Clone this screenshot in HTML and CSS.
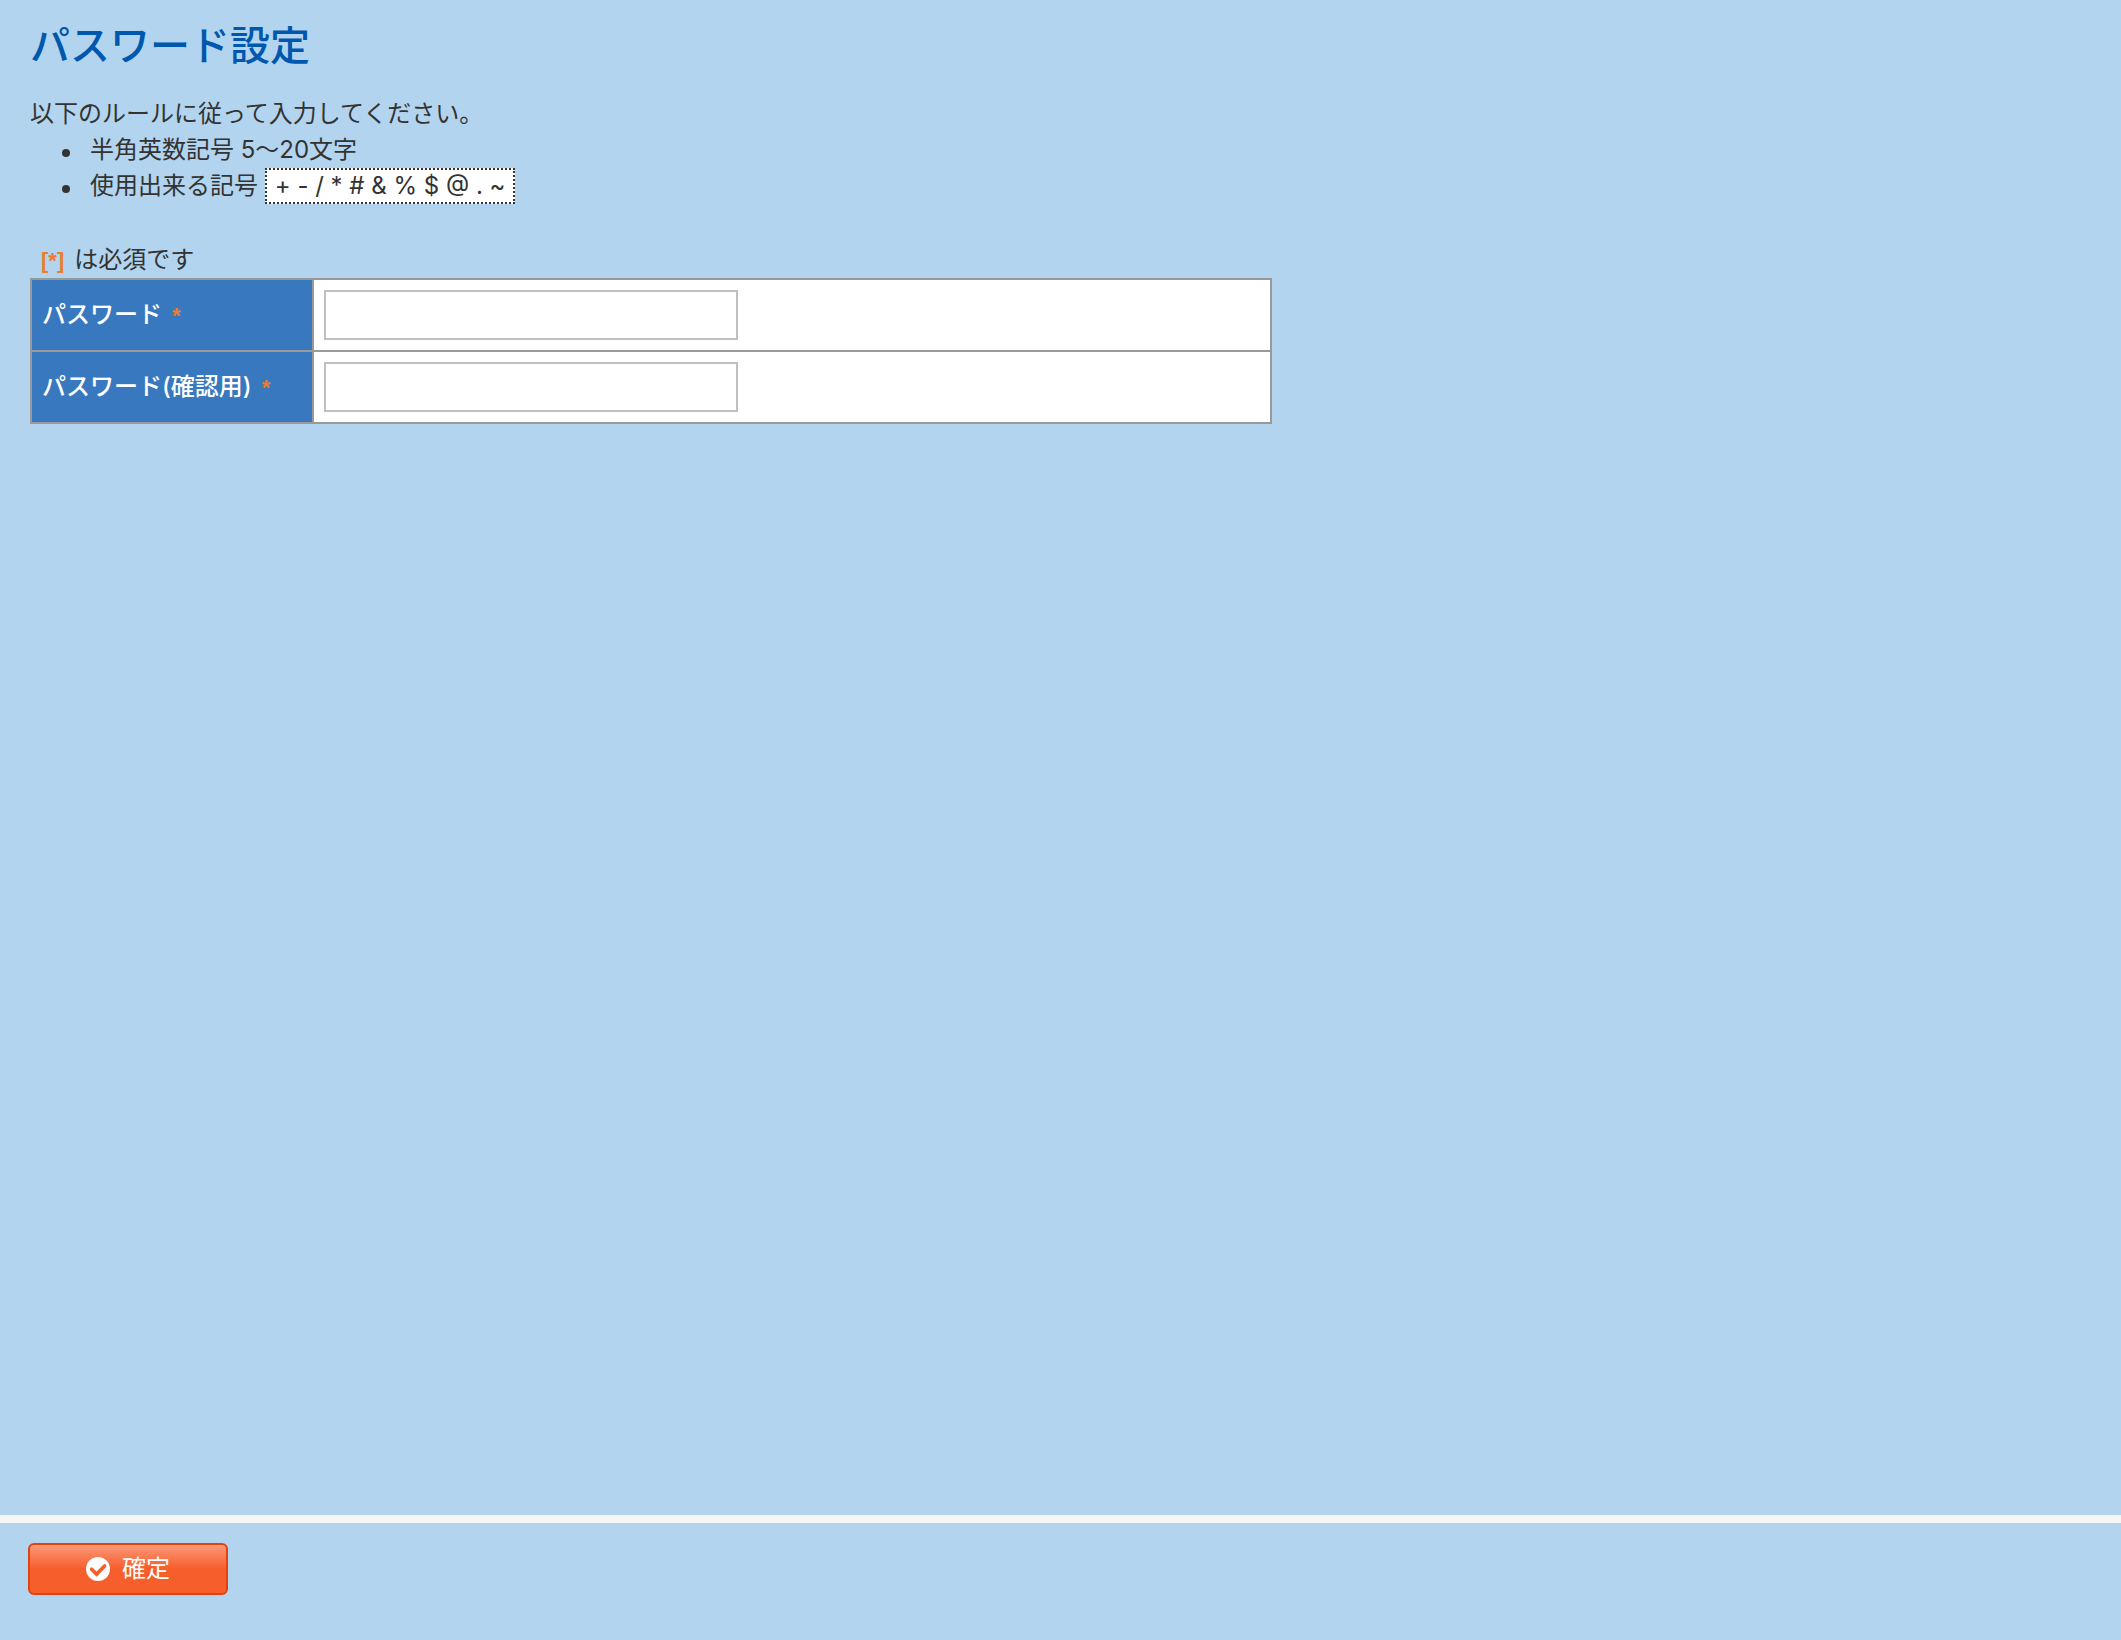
FILE: index.html
```html
<!DOCTYPE html>
<html lang="ja">
<head>
  <meta charset="UTF-8">
  <meta name="viewport" content="width=device-width, initial-scale=1.0">
  <title>パスワード設定</title>
  <link rel="stylesheet" href="styles.css">
</head>
<body>
  <form class="page">
    <main class="content">
      <h1>パスワード設定</h1>

      <p class="lead">以下のルールに従って入力してください。</p>
      <ul class="rules">
        <li>半角英数記号 5〜20文字</li>
        <li>使用出来る記号 <span class="symbols">+ - / * # &amp; % $ @ . ~</span></li>
      </ul>

      <p class="note"><span class="required">[*]</span>は必須です</p>
      <table class="form-table">
        <tr>
          <th><label for="password">パスワード<span class="required">*</span></label></th>
          <td><input type="password" id="password" name="password"></td>
        </tr>
        <tr>
          <th><label for="passwordConfirm">パスワード(確認用)<span class="required">*</span></label></th>
          <td><input type="password" id="passwordConfirm" name="passwordConfirm"></td>
        </tr>
      </table>
    </main>

    <footer class="footer">
      <button type="submit" class="btn">
        <svg class="icon" viewBox="0 0 24 24" aria-hidden="true">
          <circle cx="12" cy="12" r="12" fill="#fff"/>
          <path d="M5.6 12.2l5 4.9 8-8.2" fill="none" stroke="#f65e2b" stroke-width="3.6" stroke-linecap="round"/>
        </svg>
        <span>確定</span>
      </button>
    </footer>
  </form>
</body>
</html>
```

FILE: styles.css
```css
* {
  box-sizing: border-box;
}
body {
  margin: 0;
  background: #b2d4ef;
  color: #333;
  font-family: Inter, "Noto Sans CJK JP", sans-serif;
  font-size: 24px;
  line-height: 36px;
}
h1 {
  margin: 0 0 20px;
  color: #0058ae;
  font-size: 40px;
  font-weight: 500;
  line-height: 60px;
}
.page {
  display: flex;
  flex-direction: column;
  min-height: 100vh;
}
.content {
  flex: 1;
  padding: 16px 30px;
}
.lead, .note {
  margin: 0;
}
.rules {
  margin: 0 0 38px;
  padding-left: 60px;
  list-style: none;
}
.rules li::before {
  content: "";
  display: inline-block;
  width: 8px;
  height: 8px;
  margin: 0 20px 0 -28px;
  border-radius: 50%;
  background: #333;
  vertical-align: 1px;
}
.symbols {
  display: inline-block;
  padding: 0 8px;
  border: 2px dotted #333;
  background: #fff;
  line-height: 32px;
  vertical-align: top;
}
.required {
  color: #ee7b30;
  font-family: "Liberation Sans", sans-serif;
  font-size: 22px;
  font-weight: bold;
  line-height: 1;
}
.note {
  padding-left: 11px;
}
.note .required {
  margin-right: 10px;
}
.form-table {
  width: 1242px;
  max-width: 100%;
  border-collapse: collapse;
}
.form-table th, .form-table td {
  padding: 10px;
  border: 2px solid #999;
}
.form-table th {
  width: 282px;
  background: #3878bf;
  color: #fff;
  font-weight: 500;
  text-align: left;
}
.form-table td {
  background: #fff;
}
.form-table th .required {
  margin-left: 10px;
}
.form-table input {
  display: block;
  width: 414px;
  max-width: 100%;
  height: 50px;
  padding: 0 10px;
  border: 2px solid #bfbfbf;
  background: #fff;
  font: inherit;
}
.footer {
  padding: 20px 28px 45px;
  border-top: 8px solid #f5f5f5;
}
.btn {
  display: flex;
  align-items: center;
  justify-content: center;
  gap: 12px;
  width: 200px;
  height: 52px;
  padding: 0;
  border: 2px solid #e2430e;
  border-radius: 6px;
  background: linear-gradient(#fb9878, #f65e2b 50%);
  color: #fff;
  font: inherit;
  cursor: pointer;
}
.icon {
  width: 24px;
  height: 24px;
}
```
